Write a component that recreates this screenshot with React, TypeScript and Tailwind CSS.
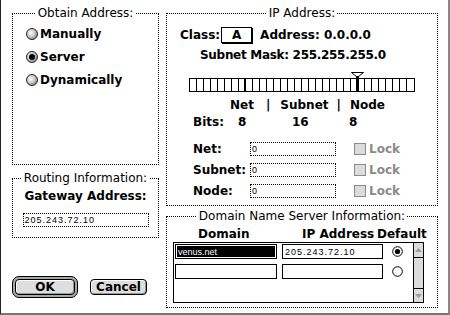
import type { ReactNode } from 'react';

const bold = "font-['DejaVu_Sans',sans-serif] font-bold text-[12px] leading-[14px]";
const small = "font-['Liberation_Sans',Arial,sans-serif] text-[9px] leading-[12px]";

function Group({ title, className, children }: { title: string; className?: string; children?: ReactNode }) {
  return (
    <fieldset className={`border border-dotted border-black min-w-0 ${className ?? ''}`}>
      <legend className="mx-auto px-[2px] text-[12px] leading-[14px]">{title}</legend>
      {children}
    </fieldset>
  );
}

function Radio3D({ on }: { on?: boolean }) {
  const id = on ? 'rg-on' : 'rg-off';
  return (
    <svg width="12" height="12" viewBox="0 0 12 12" className="shrink-0">
      <defs>
        <radialGradient id={id} cx="40%" cy="40%" r="65%">
          <stop offset="0" stopColor="#ffffff" />
          <stop offset="0.55" stopColor="#c8c8c8" />
          <stop offset="1" stopColor="#7a7a7a" />
        </radialGradient>
      </defs>
      <circle cx="6" cy="6" r="5.5" fill={`url(#${id})`} stroke="#2a2a2a" strokeWidth="1" />
      {on && <circle cx="6" cy="6" r="3" fill="#000" />}
    </svg>
  );
}

function RadioFlat({ on }: { on?: boolean }) {
  return (
    <svg width="11" height="11" viewBox="0 0 11 11" className="shrink-0">
      <circle cx="5.5" cy="5.5" r="4.8" fill="#fff" stroke="#000" strokeWidth="1" />
      {on && <circle cx="5.5" cy="5.5" r="2.6" fill="#000" />}
    </svg>
  );
}

function DottedField({ value, className }: { value: string; className?: string }) {
  return (
    <div className={`border border-dotted border-black h-[14px] pl-[1px] flex items-center ${small} ${className ?? ''}`}>
      {value}
    </div>
  );
}

function LockBox() {
  return (
    <div className="flex items-center ml-[18px]">
      <div className="w-[12px] h-[12px] border border-[#8a8a8a] bg-[#dcdcdc]" />
      <span className={`${bold} text-[#8a8a8a] ml-[3px]`}>Lock</span>
    </div>
  );
}

export default function App() {
  const cells = Array.from({ length: 32 }, (_, i) => i);
  const rows = [
    { label: 'Net:', value: '0' },
    { label: 'Subnet:', value: '0' },
    { label: 'Node:', value: '0' },
  ];

  return (
    <div className="w-[450px] h-[315px] bg-white overflow-hidden">
      <div className="w-[450px] h-[315px] border-l border-l-[#222] border-r-2 border-r-[#888] border-b-2 border-b-[#777] flex pl-[11px] pt-[6px] gap-[7px] font-['DejaVu_Sans',sans-serif] text-black">
        {/* left column */}
        <div className="w-[147px] flex flex-col">
          <Group title="Obtain Address:" className="h-[159px]">
            <div className="flex flex-col pl-[13px] pt-[7px] gap-[9px]">
              <div className="h-[14px] flex items-center">
                <Radio3D />
                <span className={`${bold} ml-[2px]`}>Manually</span>
              </div>
              <div className="h-[14px] flex items-center">
                <Radio3D on />
                <span className={`${bold} ml-[2px]`}>Server</span>
              </div>
              <div className="h-[14px] flex items-center">
                <Radio3D />
                <span className={`${bold} ml-[2px]`}>Dynamically</span>
              </div>
            </div>
          </Group>

          <Group title="Routing Information:" className="h-[67px] mt-[6px]">
            <div className={`${bold} text-center mt-[4px]`}>Gateway Address:</div>
            <DottedField value="205.243.72.10" className="w-[126px] mx-auto mt-[10px] tracking-[1px]" />
          </Group>

          <div className="flex items-center mt-[38px]">
            <div className="w-[66px] h-[22px] rounded-[7px] border border-black bg-[#a8a8a8] p-[2px]">
              <button className={`${bold} w-full h-full rounded-[4px] border border-black bg-[#dedede] shadow-[inset_1px_1px_0_#fff,inset_-1px_-1px_0_#999] flex items-center justify-center`}>
                OK
              </button>
            </div>
            <button className={`${bold} ml-[12px] w-[57px] h-[16px] rounded-[4px] border border-black bg-[#dedede] shadow-[inset_1px_1px_0_#fff,inset_-1px_-1px_0_#999] flex items-center justify-center`}>
              Cancel
            </button>
          </div>
        </div>

        {/* right column */}
        <div className="w-[272px] flex flex-col">
          <Group title="IP Address:" className="h-[200px]">
            <div className="flex items-center h-[16px] mt-[7px] pl-[13px]">
              <span className={bold}>Class:</span>
              <div className={`${bold} ml-[1px] w-[31px] h-[16px] border border-black shadow-[1px_1px_0_#000] flex items-center justify-center`}>
                A
              </div>
              <span className={`${bold} ml-[8px]`}>Address: 0.0.0.0</span>
            </div>

            <div className={`${bold} mt-[5px] pl-[33px] tracking-[-0.3px]`}>Subnet Mask: 255.255.255.0</div>

            <div className="relative mt-[16px] ml-[22px] w-[226px] h-[14px] border border-black flex">
              {cells.map((i) => (
                <div
                  key={i}
                  className={`w-[7px] h-full shrink-0 ${i === 31 ? '' : i === 7 ? 'border-r-2 border-r-black' : 'border-r border-r-black'}`}
                />
              ))}
              <svg width="13" height="20" viewBox="0 0 13 20" className="absolute left-[161px] top-[-7px]">
                <path d="M0.5 0.5 H12.5 M0.5 0.5 L5.5 4.5 M12.5 0.5 L7.5 4.5" stroke="#000" strokeWidth="1" fill="none" />
                <rect x="5" y="4" width="3" height="16" fill="#000" />
              </svg>
            </div>

            <div className={`${bold} flex mt-[6px] pl-[63px]`}>
              <span>Net</span>
              <span className="ml-[12px]">|</span>
              <span className="ml-[10px]">Subnet</span>
              <span className="ml-[8px]">|</span>
              <span className="ml-[9px]">Node</span>
            </div>

            <div className={`${bold} flex mt-[3px] pl-[26px]`}>
              <span className="w-[45px]">Bits:</span>
              <span className="w-[54px]">8</span>
              <span className="w-[57px]">16</span>
              <span>8</span>
            </div>

            <div className="flex flex-col gap-[7px] mt-[13px] pl-[26px]">
              {rows.map((r) => (
                <div key={r.label} className="flex items-center h-[14px]">
                  <span className={`${bold} w-[57px]`}>{r.label}</span>
                  <DottedField value={r.value} className="w-[86px]" />
                  <LockBox />
                </div>
              ))}
            </div>
          </Group>

          <Group title="Domain Name Server Information:" className="h-[99px] mt-[3px]">
            <div className={`${bold} flex mt-[4px] pl-[31px]`}>
              <span className="w-[104px]">Domain</span>
              <span className="w-[75px]">IP Address</span>
              <span>Default</span>
            </div>
            <div className="mt-[1px] ml-[6px] w-[251px] h-[61px] border border-black flex">
              <div className="flex-1 flex flex-col pl-[1px] pt-[1px] gap-[5px]">
                <div className="flex items-center">
                  <div className={`${small} w-[102px] h-[15px] bg-black text-white border border-black shadow-[inset_0_0_0_1px_#fff] pl-[2px] flex items-center`}>
                    venus.net
                  </div>
                  <div className={`${small} tracking-[1px] ml-[5px] w-[101px] h-[15px] border border-black pl-[2px] flex items-center`}>
                    205.243.72.10
                  </div>
                  <div className="ml-[9px]">
                    <RadioFlat on />
                  </div>
                </div>
                <div className="flex items-center">
                  <div className="w-[102px] h-[15px] border border-black" />
                  <div className="ml-[5px] w-[101px] h-[15px] border border-black" />
                  <div className="ml-[9px]">
                    <RadioFlat />
                  </div>
                </div>
              </div>
              <div className="w-[10px] border-l border-l-black bg-[#dcdcdc] flex flex-col">
                <div className="h-[15px] border-b border-b-black flex items-center justify-center">
                  <svg width="7" height="4" viewBox="0 0 7 4">
                    <path d="M3.5 0 L7 4 H0 Z" fill="#9a9a9a" />
                  </svg>
                </div>
                <div className="flex-1" />
                <div className="h-[14px] border-t border-t-black flex items-center justify-center">
                  <svg width="7" height="4" viewBox="0 0 7 4">
                    <path d="M0 0 H7 L3.5 4 Z" fill="#9a9a9a" />
                  </svg>
                </div>
              </div>
            </div>
          </Group>
        </div>
      </div>
    </div>
  );
}
